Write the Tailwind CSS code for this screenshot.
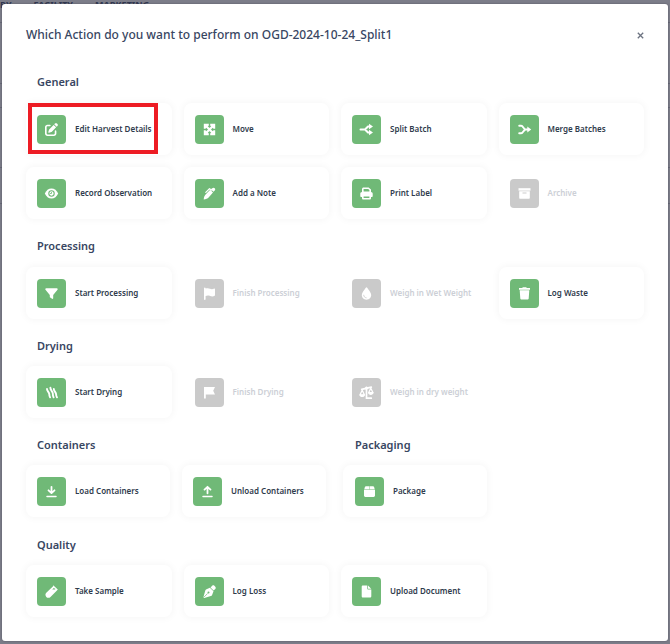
<!DOCTYPE html>
<html lang="en">
<head>
<meta charset="utf-8">
<meta name="viewport" content="width=device-width, initial-scale=1">
<title>Batch actions</title>
<script src="https://cdn.jsdelivr.net/npm/@tailwindcss/browser@4"></script>
</head>
<body class="relative min-h-screen overflow-hidden bg-[#7c7d89] font-['Noto_Sans','Open_Sans',sans-serif] text-[#384662]">

<!-- Page behind the dialog -->
<div class="absolute inset-0" aria-hidden="true">
  <nav class="flex h-[23px] items-start gap-[22px] border-b border-[#676977] text-[9px] leading-[10px] font-bold text-[#303750]">
    <span>RY</span><span>FACILITY</span><span>MARKETING</span>
  </nav>
  <div class="h-[61px] border-b border-[#676977]"></div>
  <div class="h-6 border-b border-[#676977]"></div>
  <div class="h-[60px] border-b border-[#676977]"></div>
  <div class="h-9 border-b border-[#676977]"></div>
</div>

<main role="dialog" aria-labelledby="title" class="relative mx-[2px] mt-1 rounded-[3px] bg-white px-6 pb-6 shadow-[0_0_2px_rgba(60,60,75,0.7)]">
  <header class="flex items-center justify-between pt-5 pb-[10px]">
    <h1 id="title" class="text-[12px] leading-[22px] font-medium">Which Action do you want to perform on OGD-2024-10-24_Split1</h1>
    <button type="button" aria-label="Close" class="-mr-1 flex size-4 items-center justify-center">
      <svg class="size-[7px]" viewBox="0 0 7 7" fill="none" stroke="#6c7381" stroke-width="1.3"><path d="M.8.8l5.4 5.4M6.2.8L.8 6.2"/></svg>
    </button>
  </header>

  <section>
    <h2 class="px-[11px] pt-[18px] pb-[13px] text-[11px] leading-4 font-semibold">General</h2>
    <div class="grid grid-cols-4 gap-3 text-[#2f3b4c]">
      <button type="button" class="relative flex h-[52px] items-center gap-[9px] rounded-[8px] bg-white pl-[11px] text-left text-[8px] leading-3 font-semibold shadow-[0_0_8px_rgba(0,0,0,0.05)]">
        <span class="flex size-[29px] shrink-0 items-center justify-center rounded-[4px] bg-[#70b977] text-white"><svg class="size-[13px]" viewBox="0 0 512 512" fill="currentColor"><path d="M471.6 21.7c-21.9-21.9-57.3-21.9-79.2 0L362.3 51.7l97.9 97.9 30.1-30.1c21.9-21.9 21.9-57.3 0-79.2L471.6 21.7zm-299.2 220c-6.1 6.1-10.8 13.6-13.5 21.9l-29.6 88.8c-2.9 8.6-.6 18.1 5.8 24.6s15.9 8.7 24.6 5.8l88.8-29.6c8.2-2.7 15.7-7.4 21.9-13.5L437.7 172.3 339.7 74.3 172.4 241.7zM96 64C43 64 0 107 0 160V416c0 53 43 96 96 96H352c53 0 96-43 96-96V320c0-17.7-14.3-32-32-32s-32 14.3-32 32v96c0 17.7-14.3 32-32 32H96c-17.7 0-32-14.3-32-32V160c0-17.7 14.3-32 32-32h96c17.7 0 32-14.3 32-32s-14.3-32-32-32H96z"/></svg></span>
        Edit Harvest Details
        <span class="absolute top-0 left-[2px] h-[51px] w-[130px] border-4 border-[#ed1c24]"></span>
      </button>
      <button type="button" class="flex h-[52px] items-center gap-[9px] rounded-[8px] bg-white pl-[11px] text-left text-[8px] leading-3 font-semibold shadow-[0_0_8px_rgba(0,0,0,0.05)]">
        <span class="flex size-[29px] shrink-0 items-center justify-center rounded-[4px] bg-[#70b977] text-white"><svg class="size-[15px]" viewBox="0 0 15 15" fill="currentColor"><path d="M1.800 1.800h5v1.600L3.400 6.800H1.800zM13.200 1.800v5h-1.600L8.200 3.400V1.800zM1.800 13.200v-5h1.600l3.400 3.400v1.600zM13.200 13.200h-5v-1.600l3.400-3.400h1.600z"/><path d="M3.500 3.500l8 8M11.500 3.500l-8 8" stroke="currentColor" stroke-width="2.200"/></svg></span>
        Move
      </button>
      <button type="button" class="flex h-[52px] items-center gap-[9px] rounded-[8px] bg-white pl-[11px] text-left text-[8px] leading-3 font-semibold shadow-[0_0_8px_rgba(0,0,0,0.05)]">
        <span class="flex size-[29px] shrink-0 items-center justify-center rounded-[4px] bg-[#70b977] text-white"><svg class="size-[15px]" viewBox="0 0 15 15" fill="currentColor"><path d="M1.500 7.500H6l3-3h2M6 7.500l3 3h2" fill="none" stroke="currentColor" stroke-width="2" stroke-linecap="round" stroke-linejoin="round"/><path d="M10 1.800l4 2.700-4 2.700zM10 7.800l4 2.700-4 2.700z"/></svg></span>
        Split Batch
      </button>
      <button type="button" class="flex h-[52px] items-center gap-[9px] rounded-[8px] bg-white pl-[11px] text-left text-[8px] leading-3 font-semibold shadow-[0_0_8px_rgba(0,0,0,0.05)]">
        <span class="flex size-[29px] shrink-0 items-center justify-center rounded-[4px] bg-[#70b977] text-white"><svg class="size-[15px]" viewBox="0 0 15 15" fill="currentColor"><path d="M2.200 3.800h2c1.900 0 2.400 3.700 4.500 3.700H11M2.200 11.200h2c1.900 0 2.400-3.700 4.500-3.700" fill="none" stroke="currentColor" stroke-width="1.900" stroke-linecap="round"/><path d="M10.300 4.600l3.900 2.900-3.900 2.900z"/></svg></span>
        Merge Batches
      </button>
      <button type="button" class="flex h-[52px] items-center gap-[9px] rounded-[8px] bg-white pl-[11px] text-left text-[8px] leading-3 font-semibold shadow-[0_0_8px_rgba(0,0,0,0.05)]">
        <span class="flex size-[29px] shrink-0 items-center justify-center rounded-[4px] bg-[#70b977] text-white"><svg class="size-[15px]" viewBox="0 0 15 15" fill="currentColor"><path d="M.8 7.500C2.200 4.400 4.600 2.500 7.500 2.500s5.300 1.900 6.700 5c-1.400 3.100-3.800 5-6.700 5S2.200 10.600.8 7.500z"/><circle cx="7.500" cy="7.500" r="2.700" fill="none" stroke="#70b977" stroke-width="1.100"/><path d="M7.500 6v1.500H6" fill="none" stroke="#70b977" stroke-width=".8"/></svg></span>
        Record Observation
      </button>
      <button type="button" class="flex h-[52px] items-center gap-[9px] rounded-[8px] bg-white pl-[11px] text-left text-[8px] leading-3 font-semibold shadow-[0_0_8px_rgba(0,0,0,0.05)]">
        <span class="flex size-[29px] shrink-0 items-center justify-center rounded-[4px] bg-[#70b977] text-white"><svg class="size-[15px]" viewBox="0 0 15 15" fill="currentColor"><path d="M10.300 2.200c.6-.7 1.700-.7 2.400 0s.7 1.700 0 2.400l-1.200 1.200-2.700-2.500zM8.200 3.800l2.800 2.700-4.400 4.900c-.9 1-2.700 1.700-4.900 2 .2-2.200.8-3.900 1.900-4.900z"/><path d="M3.800 6.400l3.600-3.600 2.300 1.300" fill="none" stroke="currentColor" stroke-width="1.200" stroke-linecap="round"/></svg></span>
        Add a Note
      </button>
      <button type="button" class="flex h-[52px] items-center gap-[9px] rounded-[8px] bg-white pl-[11px] text-left text-[8px] leading-3 font-semibold shadow-[0_0_8px_rgba(0,0,0,0.05)]">
        <span class="flex size-[29px] shrink-0 items-center justify-center rounded-[4px] bg-[#70b977] text-white"><svg class="size-[15px]" viewBox="0 0 15 15" fill="currentColor"><path fill-rule="evenodd" d="M3 6V3.200C3 2.300 3.700 1.600 4.600 1.600h5l2.400 1.800V6c1 0 1.700.8 1.700 1.700v2.500c0 .5-.3.800-.8.800H12v1.200c0 .8-.6 1.400-1.400 1.400H4.400c-.8 0-1.400-.6-1.400-1.400V11h-.9c-.5 0-.8-.3-.8-.8V7.700C1.300 6.800 2 6 3 6zm1.600-.6h5.800V4L9.200 3.100H4.600zm0 5v1.700h5.800v-1.700z"/></svg></span>
        Print Label
      </button>
      <button type="button" disabled class="flex h-[52px] items-center gap-[9px] pl-[11px] text-left text-[8px] leading-3 font-semibold text-[#cccfd6]">
        <span class="flex size-[29px] shrink-0 items-center justify-center rounded-[4px] bg-[#cacaca] text-white"><svg class="size-[15px]" viewBox="0 0 15 15" fill="currentColor"><path d="M1.500 2.200h12v2.400h-12z"/><path fill-rule="evenodd" d="M2.200 5.200h10.600v6.600c0 .6-.4 1-1 1H3.200c-.6 0-1-.4-1-1zm3.300 1.400v.8h4v-.8z"/></svg></span>
        Archive
      </button>
    </div>
  </section>

  <section>
    <h2 class="px-[11px] pt-[19px] pb-[13px] text-[11px] leading-4 font-semibold">Processing</h2>
    <div class="grid grid-cols-4 gap-3 text-[#2f3b4c]">
      <button type="button" class="flex h-[52px] items-center gap-[9px] rounded-[8px] bg-white pl-[11px] text-left text-[8px] leading-3 font-semibold shadow-[0_0_8px_rgba(0,0,0,0.05)]">
        <span class="flex size-[29px] shrink-0 items-center justify-center rounded-[4px] bg-[#70b977] text-white"><svg class="size-[15px]" viewBox="0 0 15 15" fill="currentColor"><path d="M2.200 2.300h10.600c.8 0 1.200.9.700 1.500L9.200 8.900v3.300c0 .6-.6.9-1.100.6l-1.900-1.400c-.3-.2-.4-.4-.4-.7V8.900L1.500 3.800c-.5-.6-.1-1.500.7-1.500z"/></svg></span>
        Start Processing
      </button>
      <button type="button" disabled class="flex h-[52px] items-center gap-[9px] pl-[11px] text-left text-[8px] leading-3 font-semibold text-[#cccfd6]">
        <span class="flex size-[29px] shrink-0 items-center justify-center rounded-[4px] bg-[#cacaca] text-white"><svg class="size-[15px]" viewBox="0 0 15 15" fill="currentColor"><path d="M2 2.300c0-1 1.600-1 1.600 0v.3c1.700-.7 3.100-.5 4.400.1 1.500.7 2.800.5 4.200-.2.400-.2.800.1.800.5v6.600c-1.700 1-3.300 1.100-4.900.4-1.500-.7-3-.6-4.500 0v3.200c0 1-1.600 1-1.600 0z"/></svg></span>
        Finish Processing
      </button>
      <button type="button" disabled class="flex h-[52px] items-center gap-[9px] pl-[11px] text-left text-[8px] leading-3 font-semibold text-[#cccfd6]">
        <span class="flex size-[29px] shrink-0 items-center justify-center rounded-[4px] bg-[#cacaca] text-white"><svg class="size-[15px]" viewBox="0 0 15 15" fill="currentColor"><path d="M7.500 1.200c.3 0 .5.2.7.5 1.400 2.200 4 4.900 4 7.300 0 2.700-2.100 4.700-4.700 4.700S2.800 11.700 2.800 9c0-2.400 2.600-5.100 4-7.300.2-.3.400-.5.700-.5z"/><path d="M4.700 9.200c.1 1.500 1 2.400 2.500 2.600" fill="none" stroke="#cacaca" stroke-width=".8" stroke-linecap="round"/></svg></span>
        Weigh in Wet Weight
      </button>
      <button type="button" class="flex h-[52px] items-center gap-[9px] rounded-[8px] bg-white pl-[11px] text-left text-[8px] leading-3 font-semibold shadow-[0_0_8px_rgba(0,0,0,0.05)]">
        <span class="flex size-[29px] shrink-0 items-center justify-center rounded-[4px] bg-[#70b977] text-white"><svg class="size-[15px]" viewBox="0 0 15 15" fill="currentColor"><path d="M2 2h3.200l.6-.8h3.400l.6.800H13v1.700H2zM2.700 4.200h9.600l-.6 8.200c-.1.700-.6 1.200-1.300 1.200H4.600c-.7 0-1.200-.5-1.300-1.200z"/></svg></span>
        Log Waste
      </button>
    </div>
  </section>

  <section>
    <h2 class="px-[11px] pt-[19px] pb-3 text-[11px] leading-4 font-semibold">Drying</h2>
    <div class="grid grid-cols-4 gap-3 text-[#2f3b4c]">
      <button type="button" class="flex h-[52px] items-center gap-[9px] rounded-[8px] bg-white pl-[11px] text-left text-[8px] leading-3 font-semibold shadow-[0_0_8px_rgba(0,0,0,0.05)]">
        <span class="flex size-[29px] shrink-0 items-center justify-center rounded-[4px] bg-[#70b977] text-white"><svg class="size-[15px]" viewBox="0 0 15 15" fill="none" stroke="currentColor" stroke-width="1.900" stroke-linecap="round"><path d="M3 4c0 2.200 2.300 3 2.300 5.300 0 1.200.1 2.200.8 3M6.400 2.800c-.1 2.600 2.400 3.400 2.400 5.800 0 1.400.1 2.800.8 3.700M9.800 4c0 2.200 2.300 3 2.300 5.300 0 1.200.2 2.200.9 3"/></svg></span>
        Start Drying
      </button>
      <button type="button" disabled class="flex h-[52px] items-center gap-[9px] pl-[11px] text-left text-[8px] leading-3 font-semibold text-[#cccfd6]">
        <span class="flex size-[29px] shrink-0 items-center justify-center rounded-[4px] bg-[#cacaca] text-white"><svg class="size-[15px]" viewBox="0 0 15 15" fill="currentColor"><path d="M2 2h11l-1.800 3.800L13 9.600H3.800v3.800H2z"/></svg></span>
        Finish Drying
      </button>
      <button type="button" disabled class="flex h-[52px] items-center gap-[9px] pl-[11px] text-left text-[8px] leading-3 font-semibold text-[#cccfd6]">
        <span class="flex size-[29px] shrink-0 items-center justify-center rounded-[4px] bg-[#cacaca] text-white"><svg class="size-[15px]" viewBox="0 0 15 15" fill="none" stroke="currentColor"><path d="M2.700 4.300l9.600-2.200M7.500 2.500v10.700h4.800" stroke-width="1.700" stroke-linecap="round"/><circle cx="7.500" cy="3" r="1.500" fill="currentColor" stroke="none"/><path d="M3.200 5.300L1 9.800h4.400zM11.800 3.200L9.600 7.700H14z" stroke-width="1.300" stroke-linejoin="round"/><path d="M.4 9.700H6c-.2 1.500-1.300 2.400-2.800 2.400S.6 11.200.4 9.700zM9 7.600h5.600c-.2 1.500-1.300 2.400-2.800 2.400S9.200 9.100 9 7.600z" fill="currentColor" stroke="none"/></svg></span>
        Weigh in dry weight
      </button>
    </div>
  </section>

  <div class="grid grid-cols-[300fr_144fr_140fr] gap-x-[17px]">
    <section>
      <h2 class="px-[11px] pt-[19px] pb-3 text-[11px] leading-4 font-semibold">Containers</h2>
      <div class="grid grid-cols-2 gap-3 text-[#2f3b4c]">
        <button type="button" class="flex h-[52px] items-center gap-[9px] rounded-[8px] bg-white pl-[11px] text-left text-[8px] leading-3 font-semibold shadow-[0_0_8px_rgba(0,0,0,0.05)]">
          <span class="flex size-[29px] shrink-0 items-center justify-center rounded-[4px] bg-[#70b977] text-white"><svg class="size-[15px]" viewBox="0 0 15 15" fill="none" stroke="currentColor" stroke-width="1.800" stroke-linecap="round" stroke-linejoin="round"><path d="M7.500 2.800v6M4.500 6.300l3 2.800 3-2.800"/><path d="M3 12.400h9" stroke-width="1.500"/></svg></span>
          Load Containers
        </button>
        <button type="button" class="flex h-[52px] items-center gap-[9px] rounded-[8px] bg-white pl-[11px] text-left text-[8px] leading-3 font-semibold shadow-[0_0_8px_rgba(0,0,0,0.05)]">
          <span class="flex size-[29px] shrink-0 items-center justify-center rounded-[4px] bg-[#70b977] text-white"><svg class="size-[15px]" viewBox="0 0 15 15" fill="none" stroke="currentColor" stroke-width="1.800" stroke-linecap="round" stroke-linejoin="round"><path d="M7.500 9.300v-6M4.500 5.600l3-2.800 3 2.800"/><path d="M3 12.400h9" stroke-width="1.500"/></svg></span>
          Unload Containers
        </button>
      </div>
    </section>
    <section>
      <h2 class="px-3 pt-[19px] pb-3 text-[11px] leading-4 font-semibold">Packaging</h2>
      <div class="grid text-[#2f3b4c]">
        <button type="button" class="flex h-[52px] items-center gap-[9px] rounded-[8px] bg-white pl-3 text-left text-[8px] leading-3 font-semibold shadow-[0_0_8px_rgba(0,0,0,0.05)]">
          <span class="flex size-[29px] shrink-0 items-center justify-center rounded-[4px] bg-[#70b977] text-white"><svg class="size-[15px]" viewBox="0 0 15 15" fill="currentColor"><path d="M4 2.200h3.300v3.100H2.300l.6-2.300c.1-.5.600-.8 1.100-.8zM7.700 2.200H11c.5 0 1 .3 1.100.8l.6 2.300h-5zM2 5.700h11v5.900c0 .8-.6 1.400-1.400 1.400H3.400c-.8 0-1.400-.6-1.400-1.400z"/></svg></span>
          Package
        </button>
      </div>
    </section>
  </div>

  <section>
    <h2 class="px-[11px] pt-5 pb-3 text-[11px] leading-4 font-semibold">Quality</h2>
    <div class="grid grid-cols-4 gap-3 text-[#2f3b4c]">
      <button type="button" class="flex h-[52px] items-center gap-[9px] rounded-[8px] bg-white pl-[11px] text-left text-[8px] leading-3 font-semibold shadow-[0_0_8px_rgba(0,0,0,0.05)]">
        <span class="flex size-[29px] shrink-0 items-center justify-center rounded-[4px] bg-[#70b977] text-white"><svg class="size-[15px]" viewBox="0 0 15 15" fill="currentColor"><path fill-rule="evenodd" d="M9.200 1.300l4.600 4.300-1.100 1.100-6.200 6.200c-1.200 1.200-3.100 1.200-4.200 0s-1.200-2.900 0-4.100l6.800-6.500zM9.800 4L8.200 5.600h2.700l.6-.6z"/></svg></span>
        Take Sample
      </button>
      <button type="button" class="flex h-[52px] items-center gap-[9px] rounded-[8px] bg-white pl-[11px] text-left text-[8px] leading-3 font-semibold shadow-[0_0_8px_rgba(0,0,0,0.05)]">
        <span class="flex size-[29px] shrink-0 items-center justify-center rounded-[4px] bg-[#70b977] text-white"><svg class="size-[15px]" viewBox="0 0 15 15" fill="currentColor"><path d="M10.200 1.800c.6-.6 1.600-.6 2.200 0l.9.900c.6.600.6 1.600 0 2.200l-1.700 1.700-3.100-3.100zM7.900 3.700l3.600 3.600-1.400 3.600c-.2.600-.6 1-1.200 1.200l-6.700 1.900-.8-.8L3.300 6.500c.2-.6.600-1 1.200-1.200z"/><path d="M2 13.100l3.700-3.700" stroke="#70b977" stroke-width=".7"/><circle cx="6.500" cy="8.600" r="1" fill="#70b977"/></svg></span>
        Log Loss
      </button>
      <button type="button" class="flex h-[52px] items-center gap-[9px] rounded-[8px] bg-white pl-[11px] text-left text-[8px] leading-3 font-semibold shadow-[0_0_8px_rgba(0,0,0,0.05)]">
        <span class="flex size-[29px] shrink-0 items-center justify-center rounded-[4px] bg-[#70b977] text-white"><svg class="size-[15px]" viewBox="0 0 15 15" fill="currentColor"><path d="M4 1.500h4.300v2.900c0 .6.400 1 1 1h3v6.800c0 .8-.6 1.300-1.300 1.300H4c-.8 0-1.300-.6-1.300-1.300V2.800c0-.8.5-1.300 1.300-1.300zM9 1.600l3.200 3.100H9z"/></svg></span>
        Upload Document
      </button>
    </div>
  </section>
</main>
</body>
</html>
